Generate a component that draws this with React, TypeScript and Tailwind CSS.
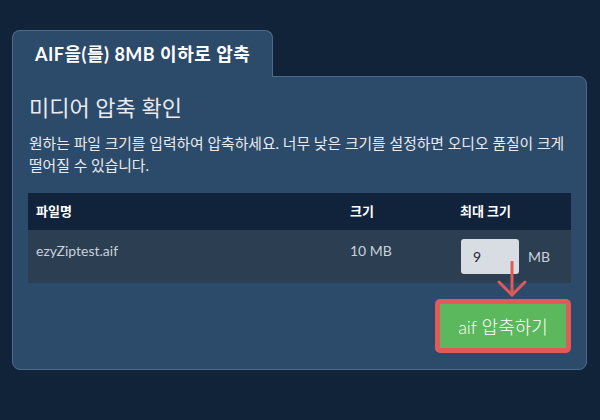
const font = { fontFamily: 'Lato, "Noto Sans CJK KR", sans-serif' };

function CompressArrow() {
  return (
    <svg
      className="pointer-events-none absolute left-[36px] top-[22px]"
      width="30"
      height="39"
      viewBox="0 0 30 39"
      fill="none"
      stroke="#e05a5a"
      strokeWidth="3"
      strokeLinecap="round"
      strokeLinejoin="round"
    >
      <path d="M15 1 L15 34" />
      <path d="M2 21 L15 34 L28 21" />
    </svg>
  );
}

export default function App() {
  return (
    <div className="h-[420px] w-[600px] bg-[#112338] pt-[30px] pl-3 pr-[13px]" style={font}>
      <div className="relative z-10 -mb-px inline-block rounded-t-lg border border-b-0 border-[#4d6a8a] bg-[#2c4a6a] px-[22px] pt-[10px] pb-[10px] text-[18px] leading-[26px] font-bold tracking-[0.5px] text-white">
        AIF을(를) 8MB 이하로 압축
      </div>
      <div className="rounded-tr-lg rounded-b-lg border border-[#4d6a8a] bg-[#2c4a6a] px-[15px] pt-[16px] pb-[16px]">
        <h2 className="pl-px text-[22px] leading-[30px] text-[#e8ebef]">미디어 압축 확인</h2>
        <p className="mt-[9px] pl-px text-[14.8px] leading-[22px] break-keep text-[#e8ebef]">
          원하는 파일 크기를 입력하여 압축하세요. 너무 낮은 크기를 설정하면 오디오 품질이 크게 떨어질 수
          있습니다.
        </p>
        <table className="mt-[17px] w-full border-collapse text-left">
          <thead>
            <tr className="h-[37px] bg-[#10233a] text-[13px] font-bold text-white">
              <th className="w-[314px] px-2">파일명</th>
              <th className="w-[110px] px-2">크기</th>
              <th className="px-2">최대 크기</th>
            </tr>
          </thead>
          <tbody>
            <tr className="h-[53px] bg-[#2c3e52] text-[14px] text-[#c9d1da]">
              <td className="px-2 pt-[10px] align-top leading-[21px]">ezyZiptest.aif</td>
              <td className="px-2 pt-[10px] align-top leading-[21px]">10 MB</td>
              <td className="px-2 py-[9px] pl-[9px] align-top">
                <div className="relative flex items-center gap-[9px]">
                  <div className="flex h-[35px] w-[58px] items-center rounded-[3px] bg-[#d8dde4] pl-3 text-[14px] text-[#1c2633]">
                    9
                  </div>
                  <span className="text-[14px] text-[#c9d1da]">MB</span>
                  <CompressArrow />
                </div>
              </td>
            </tr>
          </tbody>
        </table>
        <div className="mt-4 flex justify-end">
          <button className="flex h-[54px] w-[136px] items-center justify-center rounded-[5px] border-[5px] border-[#e05a5a] bg-[#5cb85c] pt-[2px] text-[18px] font-light text-white">
            aif 압축하기
          </button>
        </div>
      </div>
    </div>
  );
}
